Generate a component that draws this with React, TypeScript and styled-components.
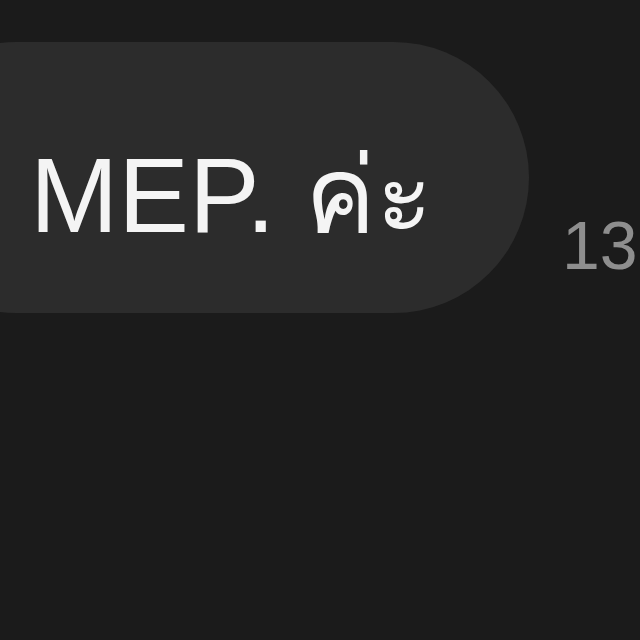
import styled, { createGlobalStyle } from 'styled-components'

const GlobalStyle = createGlobalStyle`
  html, body {
    margin: 0;
    padding: 0;
    background: #1b1b1b;
    overflow: hidden;
  }
  body {
    font-family: "Liberation Sans", "Noto Sans", sans-serif;
  }
`

const Screen = styled.div`
  width: 640px;
  height: 640px;
  padding-top: 42px;
  box-sizing: border-box;
  overflow: hidden;
`

const MessageRow = styled.div`
  display: flex;
  align-items: flex-end;
  gap: 33px;
  white-space: nowrap;
`

const Bubble = styled.div`
  flex: none;
  margin-left: -120px;
  padding: 99px 96px 64px 150px;
  background: #2c2c2c;
  border-radius: 136px;
  color: #f4f4f4;
  font-size: 106px;
  line-height: 108px;
  height: 108px;
`

const Time = styled.span`
  flex: none;
  margin-bottom: 34px;
  color: #8e8e8e;
  font-size: 68px;
  line-height: 68px;
`

export default function App() {
  return (
    <Screen>
      <GlobalStyle />
      <MessageRow>
        <Bubble>MEP. ค่ะ</Bubble>
        <Time>13:42</Time>
      </MessageRow>
    </Screen>
  )
}
